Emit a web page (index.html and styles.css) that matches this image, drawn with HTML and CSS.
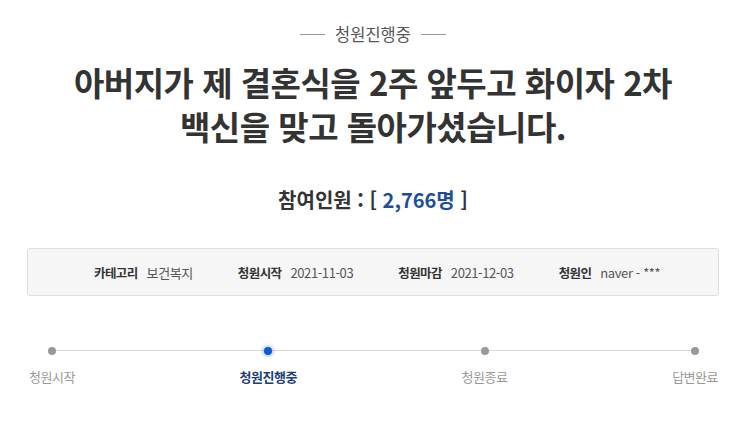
FILE: index.html
```html
<!DOCTYPE html>
<html lang="ko">
<head>
<meta charset="utf-8">
<link rel="stylesheet" href="styles.css">
</head>
<body>
<div class="page">
  <div class="status"><span class="status-line"></span><span class="status-text">청원진행중</span><span class="status-line"></span></div>
  <h1 class="title">아버지가 제 결혼식을 2주 앞두고 화이자 2차<br>백신을 맞고 돌아가셨습니다.</h1>
  <div class="count">참여인원 : [ <span class="num">2,766명</span> ]</div>
  <div class="info">
    <div class="info-item"><span class="label">카테고리</span><span class="value">보건복지</span></div>
    <div class="info-item"><span class="label">청원시작</span><span class="value">2021-11-03</span></div>
    <div class="info-item"><span class="label">청원마감</span><span class="value">2021-12-03</span></div>
    <div class="info-item"><span class="label">청원인</span><span class="value">naver - ***</span></div>
  </div>
  <div class="steps">
    <div class="step"><span class="dot"></span><span class="step-label">청원시작</span></div>
    <div class="step active"><span class="dot"></span><span class="step-label">청원진행중</span></div>
    <div class="step"><span class="dot"></span><span class="step-label">청원종료</span></div>
    <div class="step"><span class="dot"></span><span class="step-label">답변완료</span></div>
  </div>
</div>
</body>
</html>
```

FILE: styles.css
```css
* { box-sizing: border-box; }
body {
  margin: 0;
  background: #fff;
  font-family: "Noto Sans CJK KR", "Noto Sans", sans-serif;
  color: #333;
}
.page {
  width: 745px;
  padding: 22px 26px 0 27px;
}
.status {
  display: flex;
  justify-content: center;
  align-items: center;
  gap: 10px;
  height: 24px;
}
.status-line {
  width: 25px;
  height: 1px;
  background: #999;
}
.status-text {
  font-size: 16.5px;
  color: #555;
  line-height: 24px;
}
.title {
  margin: 14px 0 0;
  text-align: center;
  font-size: 33px;
  font-weight: 700;
  line-height: 44px;
  color: #333;
  letter-spacing: -0.5px;
}
.count {
  margin-top: 38px;
  text-align: center;
  font-size: 20px;
  font-weight: 700;
  color: #333;
  line-height: 28px;
}
.count .num { color: #1d4e9b; }
.info {
  margin-top: 34px;
  height: 48px;
  border: 1px solid #dedede;
  border-radius: 3px;
  background: #f6f6f6;
  display: flex;
  align-items: center;
  padding-left: 66px;
  gap: 45px;
  font-size: 13px;
}
.info-item { display: flex; gap: 9px; align-items: center; }
.label { font-weight: 700; color: #333; font-size: 12.5px; letter-spacing: -0.6px; }
.value { color: #555; letter-spacing: -0.4px; }
.steps {
  position: relative;
  margin: 51px 1px 0 2px;
  display: flex;
  justify-content: space-between;
}
.steps::before {
  content: "";
  position: absolute;
  left: 22px;
  right: 22px;
  top: 3px;
  height: 1px;
  background: #d9d9d9;
}
.step {
  position: relative;
  display: flex;
  flex-direction: column;
  align-items: center;
  gap: 13px;
}
.dot {
  width: 8px;
  height: 8px;
  border-radius: 50%;
  background: #999;
}
.step.active .dot {
  background: #0a5bd1;
  box-shadow: 0 0 3px 2px rgba(10, 91, 209, 0.25);
}
.step-label {
  font-size: 13px;
  color: #999;
  line-height: 18px;
  letter-spacing: -0.5px;
}
.step.active .step-label { color: #1d3f7a; font-weight: 700; }
```
